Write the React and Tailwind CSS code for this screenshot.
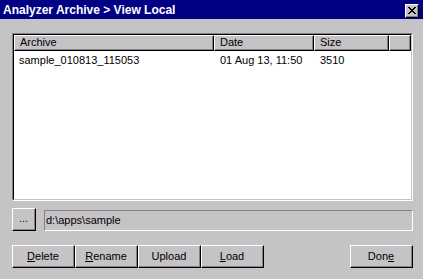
import React from "react";

function RaisedButton({ children, className = "" }) {
  return (
    <div className={"border border-t-white border-l-white border-r-black border-b-black " + className}>
      <div className="h-full w-full border-r border-b border-r-[#848284] border-b-[#848284] flex items-center justify-center">
        {children}
      </div>
    </div>
  );
}

function HeaderCell({ children, className = "" }) {
  return (
    <div className={"h-full border border-t-white border-l-white border-r-black border-b-black " + className}>
      <div className="h-full w-full border-r border-b border-r-[#848284] border-b-[#848284] pl-[5px] flex items-center leading-none">
        {children}
      </div>
    </div>
  );
}

export default function App() {
  return (
    <div
      className="w-[423px] h-[279px] bg-[#c6c3c6] flex flex-col text-[11px] text-black select-none overflow-hidden"
      style={{ fontFamily: '"Liberation Sans", Arial, sans-serif' }}
    >
      {/* Title bar */}
      <div className="h-[19px] bg-[#000084] flex items-center justify-between pl-[3px] pr-[4px] shrink-0">
        <span className="text-white font-bold text-[12px] leading-none">Analyzer Archive &gt; View Local</span>
        <div className="w-[14px] h-[14px] mt-[2px] border border-t-white border-l-white border-r-black border-b-black bg-[#c6c3c6]">
          <div className="w-full h-full border-r border-b border-r-[#848284] border-b-[#848284] flex items-center justify-center">
            <svg width="8" height="7" viewBox="0 0 8 7" shapeRendering="crispEdges">
              <path d="M0 0h2v1h-2zM6 0h2v1h-2zM1 1h2v1h-2zM5 1h2v1h-2zM2 2h4v1h-4zM3 3h2v1h-2zM2 4h4v1h-4zM1 5h2v1h-2zM5 5h2v1h-2zM0 6h2v1h-2zM6 6h2v1h-2z" fill="#000" />
            </svg>
          </div>
        </div>
      </div>

      <div className="flex flex-col pl-[12px] pr-[10px] pt-[14px]">
        {/* List view */}
        <div className="h-[168px] border border-t-[#848284] border-l-[#848284] border-r-white border-b-white">
          <div className="h-full border border-t-black border-l-black border-r-[#c6c3c6] border-b-[#c6c3c6] bg-white flex flex-col">
            <div className="flex h-[16px] shrink-0 bg-[#c6c3c6]">
              <HeaderCell className="w-[200px]">Archive</HeaderCell>
              <HeaderCell className="w-[100px]">Date</HeaderCell>
              <HeaderCell className="w-[75px]">Size</HeaderCell>
              <HeaderCell className="w-[22px]"></HeaderCell>
            </div>
            <div className="flex h-[14px] mt-[2px] items-center leading-none">
              <div className="w-[200px] pl-[5px]">sample_010813_115053</div>
              <div className="w-[100px] pl-[6px]">01 Aug 13, 11:50</div>
              <div className="w-[75px] pl-[6px]">3510</div>
            </div>
          </div>
        </div>

        {/* Path row */}
        <div className="flex items-start mt-[7px] gap-[8px]">
          <RaisedButton className="w-[24px] h-[23px] shrink-0">
            <span className="leading-none -mt-[1px]">...</span>
          </RaisedButton>
          <div className="flex-1 h-[21px] mt-[2px] border border-t-[#848284] border-l-[#848284] border-r-white border-b-white flex items-center pl-[1px] leading-none">
            d:\apps\sample
          </div>
        </div>

        {/* Buttons row */}
        <div className="flex mt-[14px]">
          <RaisedButton className="w-[63px] h-[23px]">
            <span><span className="underline underline-offset-1">D</span>elete</span>
          </RaisedButton>
          <RaisedButton className="w-[63px] h-[23px]">
            <span><span className="underline underline-offset-1">R</span>ename</span>
          </RaisedButton>
          <RaisedButton className="w-[63px] h-[23px]">
            <span>Upload</span>
          </RaisedButton>
          <RaisedButton className="w-[63px] h-[23px]">
            <span><span className="underline underline-offset-1">L</span>oad</span>
          </RaisedButton>
          <div className="flex-1" />
          <RaisedButton className="w-[63px] h-[23px]">
            <span>Don<span className="underline underline-offset-1">e</span></span>
          </RaisedButton>
        </div>
      </div>
    </div>
  );
}
